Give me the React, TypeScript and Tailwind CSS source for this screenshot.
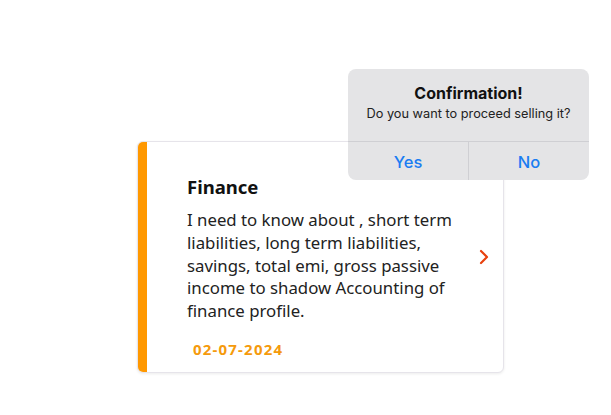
import { ChevronRight } from 'lucide-react';

const CARD_FONT = { fontFamily: '"Noto Sans", "Open Sans", sans-serif' };
const DIALOG_FONT = { fontFamily: 'Inter, "Liberation Sans", sans-serif' };

function NoteCard() {
  return (
    <div className="flex w-[367px] h-[232px] rounded-[6px] border border-[#e6e4ea] bg-white shadow-[0_1px_3px_rgba(0,0,0,0.08)] overflow-hidden">
      <div className="w-[9px] bg-[#ff9800] shrink-0" />
      <div className="flex-1 flex items-start pl-[40px] pr-[12px]" style={CARD_FONT}>
        <div className="flex-1 min-w-0 pt-[33px]">
          <h2 className="text-[18.5px] leading-[24px] font-bold text-[#111]">Finance</h2>
          <p className="mt-[10px] text-[16.8px] leading-[22.75px] text-[#222] w-[285px]">
            I need to know about , short term liabilities, long term liabilities, savings, total emi, gross passive income to shadow Accounting of finance profile.
          </p>
          <div className="mt-[17px] ml-[6px] text-[15px] leading-[18px] font-bold tracking-[0.08em] text-[#f59a0c]">
            02-07-2024
          </div>
        </div>
        <ChevronRight className="text-[#e8410e] shrink-0 mt-[103px]" width={24} height={24} strokeWidth={2.2} />
      </div>
    </div>
  );
}

function ConfirmDialog() {
  return (
    <div
      className="absolute left-[348px] top-[69px] w-[241px] rounded-[8px] bg-[#e4e4e6] overflow-hidden"
      style={DIALOG_FONT}
    >
      <div className="flex flex-col items-center pt-[14px] pb-[19px]">
        <div className="text-[16px] leading-[20px] font-bold text-[#111]">Confirmation!</div>
        <div className="mt-[3px] text-[12.75px] leading-[16px] text-[#222]">Do you want to proceed selling it?</div>
      </div>
      <div className="flex border-t border-[#cfcfd3] h-[39px]">
        <button className="flex-1 pt-[3px] text-[16.5px] font-medium text-[#1a7cf2] border-r border-[#cfcfd3]">Yes</button>
        <button className="flex-1 pt-[3px] text-[16.5px] font-medium text-[#1a7cf2]">No</button>
      </div>
    </div>
  );
}

export default function App() {
  return (
    <div className="relative w-[611px] h-[415px] bg-white">
      <div className="pt-[141px] pl-[137px]">
        <NoteCard />
      </div>
      <ConfirmDialog />
    </div>
  );
}
